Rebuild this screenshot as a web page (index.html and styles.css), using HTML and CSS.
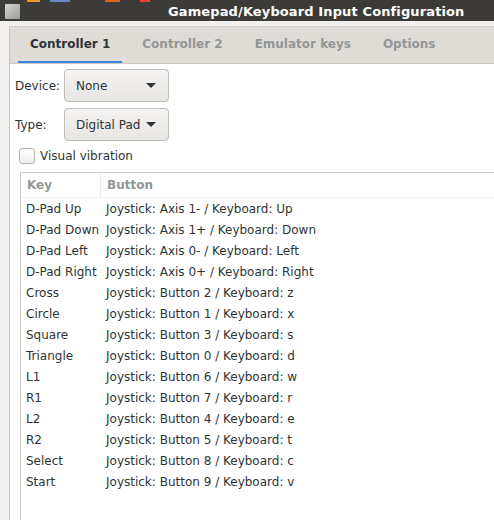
FILE: index.html
```
<!DOCTYPE html>
<html>
<head>
<meta charset="utf-8">
<link rel="stylesheet" href="styles.css">
</head>
<body>
<div class="deskstrip"></div>
<div class="titlebar">
  <div class="appicon"></div>
  <div class="title">Gamepad/Keyboard Input Configuration</div>
</div>
<div class="frame">
  <div class="window">
    <div class="tabs">
      <div class="tab active">Controller 1</div>
      <div class="tab">Controller 2</div>
      <div class="tab">Emulator keys</div>
      <div class="tab">Options</div>
    </div>
    <div class="page">
      <div class="field">
        <span class="label">Device:</span>
        <div class="combo"><span>None</span><span class="arrow"></span></div>
      </div>
      <div class="field">
        <span class="label">Type:</span>
        <div class="combo"><span>Digital Pad</span><span class="arrow"></span></div>
      </div>
      <label class="check"><span class="box"></span><span>Visual vibration</span></label>
      <div class="table">
        <div class="thead">
          <div class="th key">Key</div>
          <div class="th">Button</div>
        </div>
        <div class="tbody">
          <div class="row"><span class="key">D-Pad Up</span><span>Joystick: Axis 1- / Keyboard: Up</span></div>
          <div class="row"><span class="key">D-Pad Down</span><span>Joystick: Axis 1+ / Keyboard: Down</span></div>
          <div class="row"><span class="key">D-Pad Left</span><span>Joystick: Axis 0- / Keyboard: Left</span></div>
          <div class="row"><span class="key">D-Pad Right</span><span>Joystick: Axis 0+ / Keyboard: Right</span></div>
          <div class="row"><span class="key">Cross</span><span>Joystick: Button 2 / Keyboard: z</span></div>
          <div class="row"><span class="key">Circle</span><span>Joystick: Button 1 / Keyboard: x</span></div>
          <div class="row"><span class="key">Square</span><span>Joystick: Button 3 / Keyboard: s</span></div>
          <div class="row"><span class="key">Triangle</span><span>Joystick: Button 0 / Keyboard: d</span></div>
          <div class="row"><span class="key">L1</span><span>Joystick: Button 6 / Keyboard: w</span></div>
          <div class="row"><span class="key">R1</span><span>Joystick: Button 7 / Keyboard: r</span></div>
          <div class="row"><span class="key">L2</span><span>Joystick: Button 4 / Keyboard: e</span></div>
          <div class="row"><span class="key">R2</span><span>Joystick: Button 5 / Keyboard: t</span></div>
          <div class="row"><span class="key">Select</span><span>Joystick: Button 8 / Keyboard: c</span></div>
          <div class="row"><span class="key">Start</span><span>Joystick: Button 9 / Keyboard: v</span></div>
        </div>
      </div>
    </div>
  </div>
</div>
</body>
</html>
```
FILE: styles.css
```
html, body {
  margin: 0;
  padding: 0;
  width: 494px;
  height: 520px;
  overflow: hidden;
  background: #f1f0ef;
  font-family: "DejaVu Sans", sans-serif;
  font-size: 12px;
  color: #2e3436;
}
.deskstrip {
  height: 2px;
  background: linear-gradient(90deg, #3c3b37 0 27px, #e89b2c 27px 40px, #3c3b37 40px 50px, #6a88c0 50px 70px, #3c3b37 70px 105px, #e06020 105px 120px, #3c3b37 120px 140px, #f04040 140px 150px, #3c3b37 150px);
}
.titlebar {
  height: 19px;
  background: #3c3b37;
  display: flex;
  align-items: center;
}
.appicon {
  width: 15px;
  height: 15px;
  margin-left: 5px;
  background: linear-gradient(135deg, #d4d4d2, #9c9c9a);
  border-radius: 1px;
}
.title {
  margin-left: 148px;
  color: #ffffff;
  font-family: "DejaVu Sans", sans-serif;
  font-weight: bold;
  font-size: 13px;
  letter-spacing: 0.12px;
  line-height: 19px;
  white-space: nowrap;
}
.frame {
  padding: 5px 0 0 9px;
  background: #f1f0ef;
  height: 499px;
  box-sizing: border-box;
}
.window {
  border-left: 1px solid #c7c4bf;
  border-top: 1px solid #cdc9c4;
  background: #ffffff;
  height: 100%;
  box-sizing: border-box;
  overflow: hidden;
}
.tabs {
  display: flex;
  height: 36px;
  background: #dfdcd8;
  border-bottom: 1px solid #cdc9c4;
  padding-left: 8px;
}
.tab {
  padding: 1px 12px 0;
  line-height: 33px;
  font-weight: bold;
  font-size: 12px;
  color: #939696;
  border-bottom: 2px solid transparent;
  margin-right: 8px;
  white-space: nowrap;
}
.tab.active {
  color: #2e3436;
  border-bottom-color: #3d85d8;
}
.page {
  padding: 5px 0 0 5px;
}
.field {
  display: flex;
  align-items: center;
  height: 33px;
  margin-bottom: 6px;
}
.label {
  width: 49px;
  color: #2e3436;
}
.combo {
  width: 105px;
  height: 33px;
  box-sizing: border-box;
  border: 1px solid #bfbbb5;
  border-radius: 4px;
  background: linear-gradient(#f4f3f2, #e8e6e3);
  display: flex;
  align-items: center;
  justify-content: space-between;
  padding: 0 12px 0 11px;
  white-space: nowrap;
}
.arrow {
  width: 0;
  height: 0;
  border-left: 5px solid transparent;
  border-right: 5px solid transparent;
  border-top: 5px solid #2e3436;
}
.check {
  display: flex;
  align-items: center;
  gap: 5px;
  margin-left: 4px;
  height: 17px;
}
.box {
  width: 14px;
  height: 14px;
  border: 1px solid #b6b2ab;
  border-radius: 3px;
  background: linear-gradient(#ffffff, #f0efed);
}
.table {
  margin: 8px 0 0 5px;
  border-left: 1px solid #cdc9c4;
  border-top: 1px solid #cdc9c4;
  height: 360px;
}
.thead {
  display: flex;
  height: 24px;
  border-bottom: 1px solid #f0efee;
}
.th {
  font-weight: bold;
  color: #939696;
  line-height: 24px;
  padding-left: 6px;
}
.th.key {
  width: 73px;
  border-right: 1px solid #ecebe9;
}
.tbody {
  padding-top: 1px;
}
.row {
  display: flex;
  height: 21px;
  line-height: 21px;
  padding-left: 5px;
  color: #2e3436;
  white-space: nowrap;
}
.row .key {
  width: 80px;
}
```
